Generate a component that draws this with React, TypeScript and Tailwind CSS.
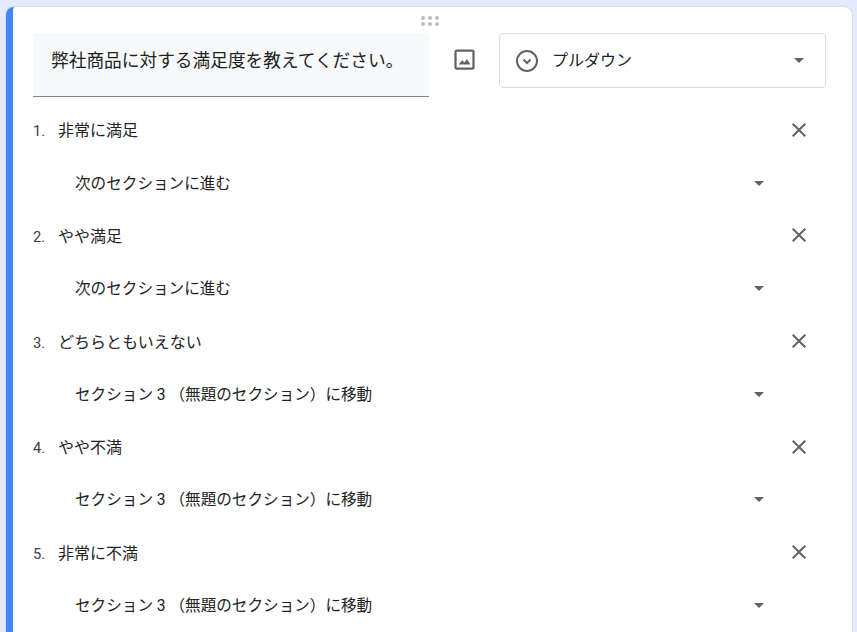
const FONT = "font-['Roboto','Noto_Sans_CJK_JP',sans-serif]";

const options = [
  { label: "非常に満足", go: "次のセクションに進む" },
  { label: "やや満足", go: "次のセクションに進む" },
  { label: "どちらともいえない", go: "セクション 3 （無題のセクション）に移動" },
  { label: "やや不満", go: "セクション 3 （無題のセクション）に移動" },
  { label: "非常に不満", go: "セクション 3 （無題のセクション）に移動" },
];

function Caret({ className }: { className: string }) {
  return <div className={`w-0 h-0 border-x-[5px] border-x-transparent border-t-[5px] border-t-[#5f6368] ${className}`} />;
}

function Close() {
  return (
    <svg width="24" height="24" viewBox="0 0 24 24" fill="#5f6368">
      <path d="M19 6.41 17.59 5 12 10.59 6.41 5 5 6.41 10.59 12 5 17.59 6.41 19 12 13.41 17.59 19 19 17.59 13.41 12z" />
    </svg>
  );
}

export default function App() {
  return (
    <div className={`h-[632px] w-[857px] overflow-hidden bg-[#e3ebfc] pl-[6px] pr-[5px] pt-[7px] ${FONT}`}>
      <div className="h-[640px] rounded-t-lg bg-white border-l-[7px] border-[#4285f4] shadow-[0_0_2px_rgba(0,0,0,0.2)] relative">
        <div className="absolute left-[408px] top-[9px] grid grid-cols-3 gap-x-[3px] gap-y-[2px]">
          {Array.from({ length: 6 }).map((_, i) => (
            <span key={i} className="w-[4px] h-[4px] rounded-full bg-[#bdbdbd]" />
          ))}
        </div>
        <div className="flex items-start pl-5 pt-[26px]">
          <div className="w-[396px] h-16 bg-[#f8f9fa] border-b border-[#80868b] flex items-center pl-[18px] pb-[7px] text-[17.7px] text-[#202124] whitespace-nowrap">
            弊社商品に対する満足度を教えてください。
          </div>
          <div className="w-[70px] h-[53px] flex items-center justify-center">
            <svg width="27" height="27" viewBox="0 0 24 24" fill="#5f6368">
              <path d="M19 3H5c-1.100 0-2 .9-2 2v14c0 1.100.9 2 2 2h14c1.100 0 2-.9 2-2V5c0-1.100-.9-2-2-2zm0 16H5V5h14v14z" />
              <path d="M14.200 11.500 11.800 14.800l-1.800-2.300L6.800 16.500h10.400z" />
            </svg>
          </div>
          <div className="w-[327px] h-[55px] border border-[#dadce0] rounded flex items-center pl-[15px] pr-[21px] text-[16px] text-[#202124]">
            <svg width="24" height="24" viewBox="0 0 24 24" fill="none" stroke="#5f6368">
              <circle cx="12" cy="12" r="10" strokeWidth="2" />
              <path d="M8.500 10.500l3.500 3.500 3.500-3.500" strokeWidth="2" />
            </svg>
            <span className="ml-[13px] flex-1">プルダウン</span>
            <Caret className="" />
          </div>
        </div>
        <div className="pl-5 pt-[7px]">
          {options.map((o, i) => (
            <div key={i}>
              <div className="h-[52.8px] flex items-center text-[#202124]">
                <span className="w-[25px] text-[14.67px] text-[#3c4043] pt-[2px]">{i + 1}.</span>
                <span className="flex-1 text-[16px] leading-none pt-[2px]">{o.label}</span>
                <span className="mr-[41px] -mt-[1px]"><Close /></span>
              </div>
              <div className="h-[52.8px] flex items-center pl-[42px] text-[15.6px] text-[#202124]">
                <span className="flex-1 pt-[2px]">{o.go}</span>
                <Caret className="mr-[88px]" />
              </div>
            </div>
          ))}
        </div>
      </div>
    </div>
  );
}
